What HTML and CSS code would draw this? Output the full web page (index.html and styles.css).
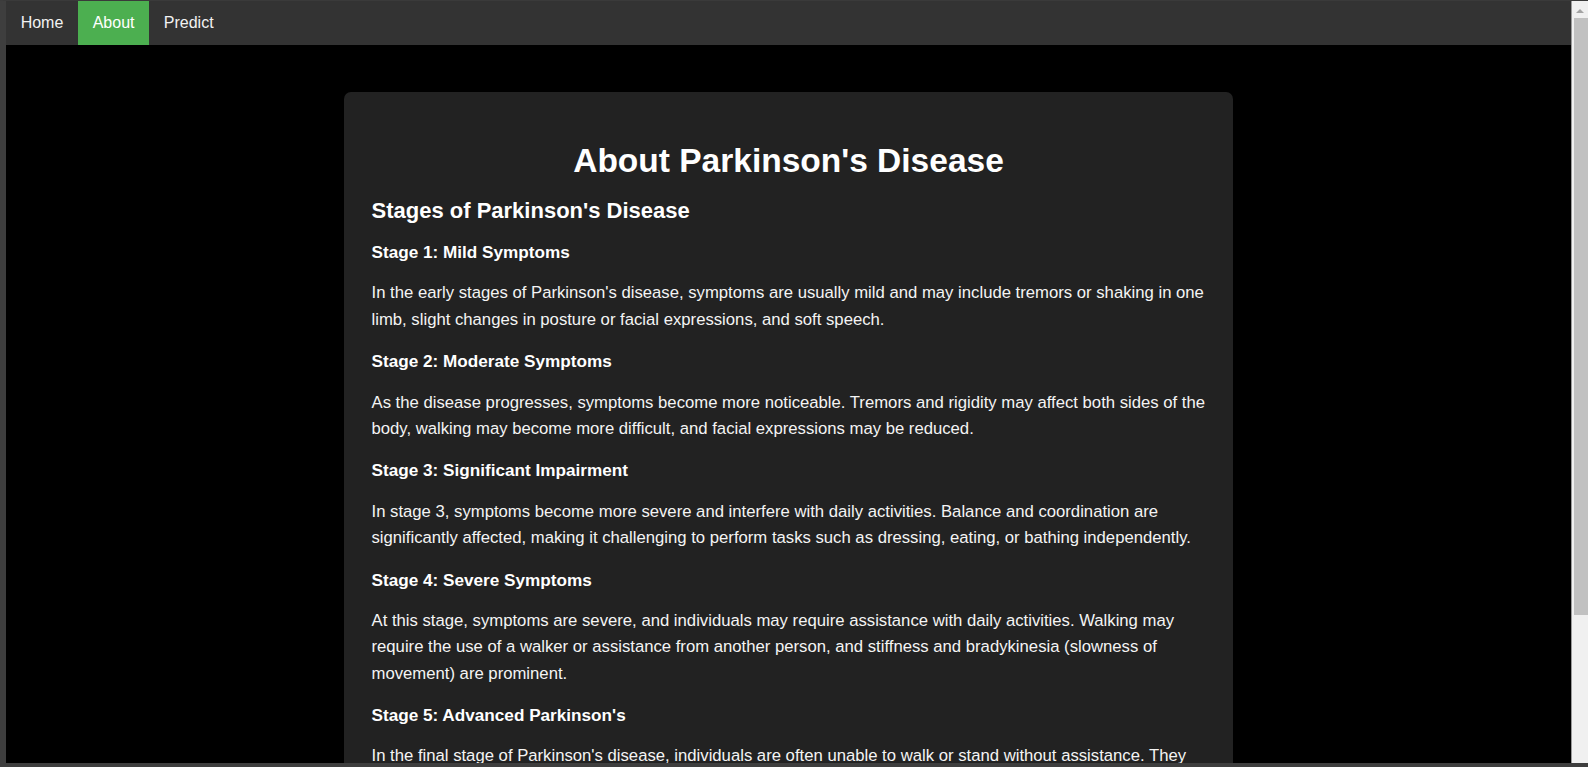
FILE: index.html
```html
<!DOCTYPE html>
<html lang="en">
<head>
<meta charset="utf-8">
<title>About Parkinson's Disease</title>
<link rel="stylesheet" href="styles.css">
</head>
<body>
<div class="window">
  <div class="viewport">
    <nav class="topnav">
      <a class="nav-link" href="#">Home</a>
      <a class="nav-link active" href="#">About</a>
      <a class="nav-link" href="#">Predict</a>
    </nav>
    <main class="page">
      <section class="card">
        <h1 class="title">About Parkinson's Disease</h1>
        <h2 class="section-title">Stages of Parkinson's Disease</h2>
        <h3 class="stage">Stage 1: Mild Symptoms</h3>
        <p class="stage-text">In the early stages of Parkinson's disease, symptoms are usually mild and may include tremors or shaking in one limb, slight changes in posture or facial expressions, and soft speech.</p>
        <h3 class="stage">Stage 2: Moderate Symptoms</h3>
        <p class="stage-text">As the disease progresses, symptoms become more noticeable. Tremors and rigidity may affect both sides of the body, walking may become more difficult, and facial expressions may be reduced.</p>
        <h3 class="stage">Stage 3: Significant Impairment</h3>
        <p class="stage-text">In stage 3, symptoms become more severe and interfere with daily activities. Balance and coordination are significantly affected, making it challenging to perform tasks such as dressing, eating, or bathing independently.</p>
        <h3 class="stage">Stage 4: Severe Symptoms</h3>
        <p class="stage-text">At this stage, symptoms are severe, and individuals may require assistance with daily activities. Walking may require the use of a walker or assistance from another person, and stiffness and bradykinesia (slowness of movement) are prominent.</p>
        <h3 class="stage">Stage 5: Advanced Parkinson's</h3>
        <p class="stage-text">In the final stage of Parkinson's disease, individuals are often unable to walk or stand without assistance. They may require a wheelchair or be bedridden, and may experience hallucinations or delusions.</p>
      </section>
    </main>
  </div>
  <div class="scrollbar">
    <div class="scroll-arrow"></div>
    <div class="scroll-thumb"></div>
  </div>
</div>
</body>
</html>
```
FILE: styles.css
```css
html, body {
  margin: 0;
  padding: 0;
  height: 100%;
  overflow: hidden;
  background: #3e3e3e;
}

.window {
  display: flex;
  height: 767px;
  box-sizing: border-box;
  border-top: 1px solid #3a3a3a;
  border-left: 6px solid #3e3e3e;
  border-bottom: 4px solid #3e3e3e;
  font-family: "Liberation Sans", Arial, sans-serif;
}

.viewport {
  flex: 1;
  display: flex;
  flex-direction: column;
  overflow: hidden;
  background: #000;
}

.topnav {
  display: flex;
  height: 44px;
  flex-shrink: 0;
  background: #333;
}

.nav-link {
  display: flex;
  align-items: center;
  padding: 0 14.67px;
  color: #f2f2f2;
  font-size: 16px;
  text-decoration: none;
}

.nav-link.active {
  background: #4caf50;
  color: #fff;
}

.page {
  flex: 1;
  padding-top: 47px;
  overflow: hidden;
}

.card {
  width: 889px;
  box-sizing: border-box;
  margin: 0 auto;
  padding: 27.5px 27.5px 40px;
  background: #222;
  border-radius: 7px;
  color: #fff;
}

.title {
  margin: 22.5px 0 0;
  font-size: 33.5px;
  line-height: 38px;
  font-weight: bold;
  text-align: center;
}

.section-title {
  margin: 17.8px 0 0;
  font-size: 22px;
  line-height: 25px;
  font-weight: bold;
}

.stage {
  margin: 19.5px 0 0;
  font-size: 17.16px;
  line-height: 20px;
  font-weight: bold;
}

.stage-text {
  margin: 18.15px 0;
  font-size: 16.7px;
  line-height: 26.4px;
  color: #f4f4f4;
}

.stage-text + .stage {
  margin-top: 0;
}

.scrollbar {
  width: 17px;
  flex-shrink: 0;
  display: flex;
  flex-direction: column;
  align-items: flex-end;
  background: #f0f0f0;
  border-left: 1px solid #9a9a9a;
  box-sizing: border-box;
}

.scroll-arrow {
  width: 0;
  height: 0;
  margin: 8px 4px 0 0;
  border-left: 4px solid transparent;
  border-right: 4px solid transparent;
  border-bottom: 4px solid #a3a3a3;
}

.scroll-thumb {
  width: 14px;
  height: 597px;
  margin-top: 5px;
  background: #c1c1c1;
}
```
